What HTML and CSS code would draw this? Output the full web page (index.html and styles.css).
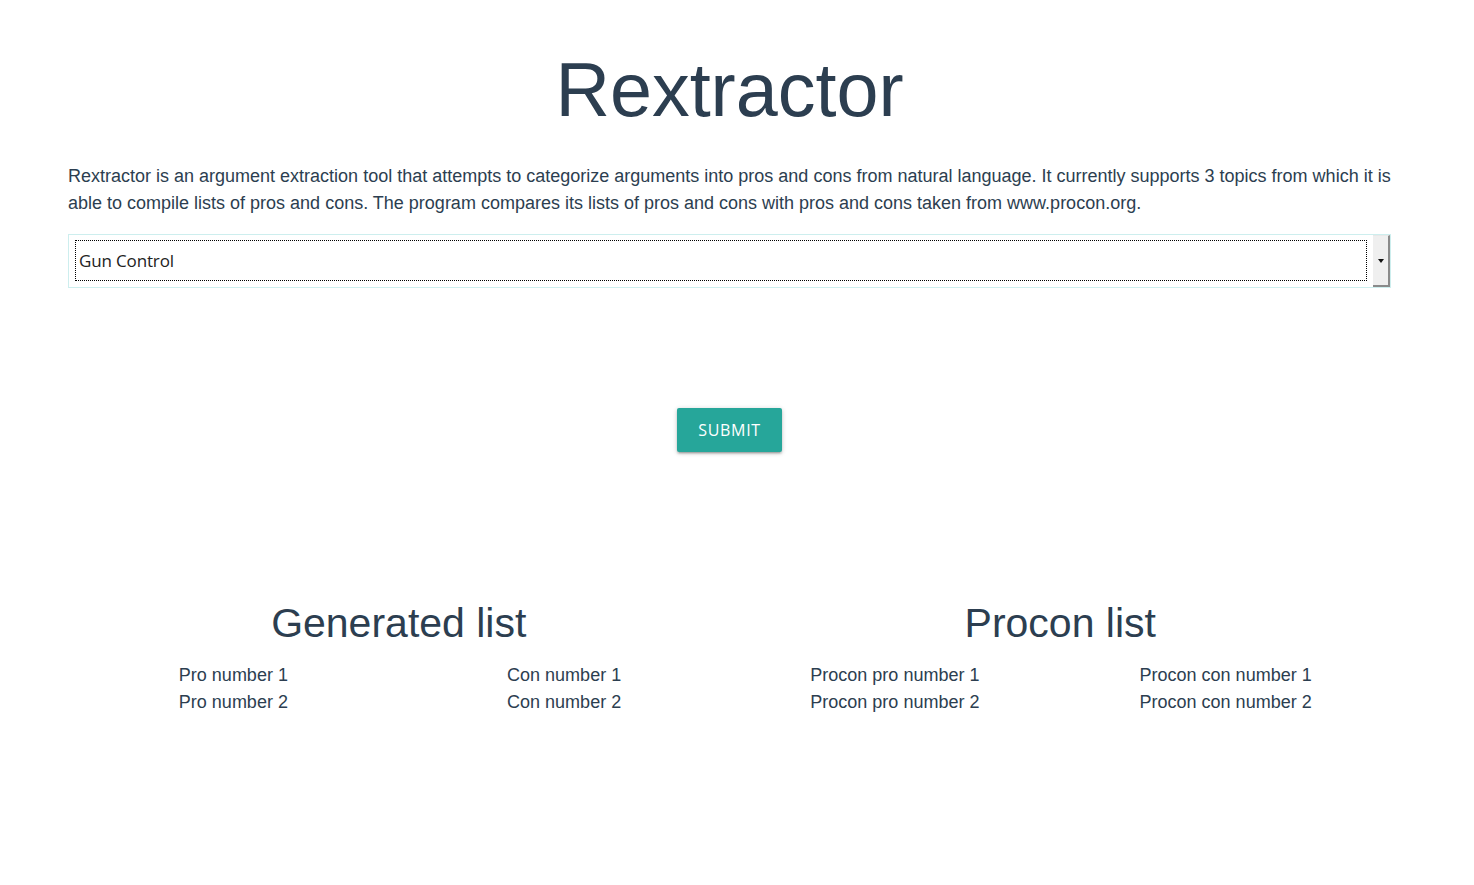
FILE: index.html
```html
<!DOCTYPE html>
<html>
<head>
<meta charset="utf-8">
<title>Rextractor</title>
<link rel="stylesheet" href="styles.css">
</head>
<body>
<div class="container">
  <h1 class="title">Rextractor</h1>
  <p class="intro">Rextractor is an argument extraction tool that attempts to categorize arguments into pros and cons from natural language. It currently supports 3 topics from which it is able to compile lists of pros and cons. The program compares its lists of pros and cons with pros and cons taken from www.procon.org.</p>
  <div class="select">
    <div class="field"><div class="field-inner">Gun Control</div></div>
    <div class="select-btn"><span class="arrow"></span></div>
  </div>
  <div class="submit-row"><button class="submit">SUBMIT</button></div>
  <div class="results">
    <div class="half">
      <h2 class="list-title">Generated list</h2>
      <div class="cols">
        <div class="col"><ul class="items"><li>Pro number 1</li><li>Pro number 2</li></ul></div>
        <div class="col"><ul class="items"><li>Con number 1</li><li>Con number 2</li></ul></div>
      </div>
    </div>
    <div class="half">
      <h2 class="list-title">Procon list</h2>
      <div class="cols">
        <div class="col"><ul class="items"><li>Procon pro number 1</li><li>Procon pro number 2</li></ul></div>
        <div class="col"><ul class="items"><li>Procon con number 1</li><li>Procon con number 2</li></ul></div>
      </div>
    </div>
  </div>
</div>
</body>
</html>
```
FILE: styles.css
```css
html, body {
  margin: 0;
  padding: 0;
  background: #fff;
}
body {
  font-family: "Liberation Sans", Arial, sans-serif;
  color: #2c3e50;
}
.container {
  margin-left: 68px;
  width: 1323px;
}
.title {
  margin: 0;
  padding-top: 53px;
  font-size: 75.5px;
  line-height: 75px;
  font-weight: 400;
  text-align: center;
}
.intro {
  margin: 35px 0 0 0;
  font-size: 18px;
  line-height: 27px;
}
.select {
  margin-top: 17px;
  display: flex;
  border: 1px solid #cdeeee;
  height: 52px;
}
.field {
  flex: 1;
  padding: 5px 6px 5px 6px;
}
.field-inner {
  height: 39px;
  border: 1px dotted #000;
  display: flex;
  align-items: center;
  padding-left: 3px;
  font-family: "Open Sans", sans-serif;
  font-size: 17px;
  letter-spacing: -0.15px;
  color: #222;
}
.select-btn {
  width: 15px;
  background: #efefef;
  border-right: 2px solid #8a8a8a;
  border-bottom: 2px solid #8a8a8a;
  border-top: 1px solid #e8e8e8;
  display: flex;
  align-items: center;
  justify-content: center;
}
.arrow {
  width: 0;
  height: 0;
  border-left: 3px solid transparent;
  border-right: 3px solid transparent;
  border-top: 4px solid #111;
}
.submit-row {
  margin-top: 120px;
  display: flex;
  justify-content: center;
}
.submit {
  width: 105px;
  height: 44px;
  border: none;
  border-radius: 2px;
  background: #26a69a;
  color: #fff;
  font-family: "Open Sans", sans-serif;
  font-size: 16px;
  letter-spacing: 0.7px;
  box-shadow: 0 2px 2px 0 rgba(0,0,0,0.14), 0 3px 1px -2px rgba(0,0,0,0.12), 0 1px 5px 0 rgba(0,0,0,0.2);
  padding: 0;
  cursor: pointer;
}
.results {
  margin-top: 147px;
  display: flex;
}
.half {
  flex: 1;
}
.list-title {
  margin: 0;
  font-size: 41px;
  line-height: 48px;
  font-weight: 400;
  text-align: center;
}
.cols {
  margin-top: 15px;
  display: flex;
}
.col {
  flex: 1;
  text-align: center;
}
.items {
  display: inline-block;
  list-style: none;
  margin: 0;
  padding: 0;
  text-align: left;
  font-size: 18px;
  line-height: 27px;
}
```
